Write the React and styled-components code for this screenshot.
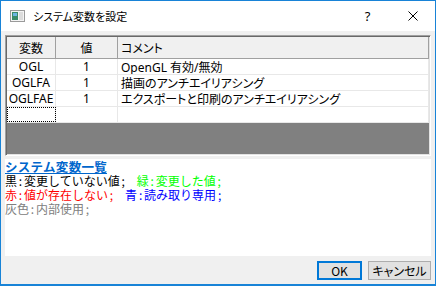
import React from 'react'
import styled, { createGlobalStyle } from 'styled-components'

const Global = createGlobalStyle`
  html, body { margin: 0; padding: 0; background: #fff; }
  * { box-sizing: border-box; }
`

const UI = `"Noto Sans", "Noto Sans CJK JP", sans-serif`
const JP = `"Noto Sans CJK JP", sans-serif`

const Window = styled.div`
  width: 436px;
  height: 286px;
  border: 1px solid #1883d7;
  border-bottom-width: 2px;
  display: flex;
  flex-direction: column;
  background: #f0f0f0;
`

const TitleBar = styled.div`
  height: 30px;
  background: #fff;
  display: flex;
  align-items: center;
  padding-left: 9px;
`

const Title = styled.div`
  flex: 1;
  margin-left: 8px;
  font-family: ${JP};
  font-size: 11px;
  font-feature-settings: "palt";
  color: #000;
`

const CaptionButton = styled.div`
  width: 45px;
  height: 30px;
  display: flex;
  align-items: center;
  justify-content: center;
  font-family: ${UI};
  font-size: 13px;
  color: #000;
`

const Body = styled.div`
  flex: 1;
  display: flex;
  flex-direction: column;
  padding: 4px 4px 5px 4px;
`

const Grid = styled.div`
  height: 121px;
  display: flex;
  flex-direction: column;
  border-top: 1px solid #a0a0a0;
  border-left: 1px solid #a0a0a0;
  border-right: 1px solid #fff;
  border-bottom: 1px solid #fff;
  box-shadow: inset 1px 1px 0 #696969, inset -1px -1px 0 #e3e3e3;
  padding: 1px;
`

const Row = styled.div`
  display: grid;
  grid-template-columns: 49px 62px 1fr;
  height: ${p => (p.$head ? 22 : 16)}px;
  background: ${p => (p.$head ? '#f0f0f0' : '#fff')};
  border-bottom: 1px solid ${p => (p.$head ? '#a0a0a0' : '#e8e8e8')};
`

const Cell = styled.div`
  display: flex;
  align-items: center;
  justify-content: ${p => (p.$left ? 'flex-start' : 'center')};
  padding-left: ${p => (p.$left ? 3 : 0)}px;
  border-right: 1px solid ${p => (p.$head ? '#a0a0a0' : '#e8e8e8')};
  font-family: ${UI};
  font-size: 12px;
  font-feature-settings: "palt";
  color: #000;
  white-space: nowrap;
  overflow: hidden;
  outline: ${p => (p.$focus ? '1px dotted #000' : 'none')};
  outline-offset: -1px;
`

const Empty = styled.div`
  flex: 1;
  background: #808080;
`

const Panel = styled.div`
  height: 97px;
  margin-top: 3px;
  background: #fff;
  font-family: ${JP};
  font-size: 12px;
  line-height: 14px;
  padding-top: 1px;
`

const Line = styled.div`
  white-space: nowrap;
  height: 14px;
`

const Heading = styled.span`
  color: #0066cc;
  font-weight: bold;
  font-size: 12.5px;
  letter-spacing: 0.3px;
  text-decoration: underline;
`

const Part = styled.span`
  color: ${p => p.$c};
  margin-left: ${p => p.$gap || 0}px;
`

const Punct = styled.span`
  display: inline-block;
  width: 7px;
  text-align: center;
`

const Buttons = styled.div`
  margin-top: 5px;
  display: flex;
  justify-content: flex-end;
  gap: 6px;
`

const Button = styled.div`
  height: 19px;
  width: ${p => p.$w}px;
  display: flex;
  align-items: center;
  justify-content: center;
  background: #e1e1e1;
  border: ${p => (p.$default ? '2px solid #0078d7' : '1px solid #adadad')};
  font-family: ${JP};
  font-size: 12px;
  font-feature-settings: "palt";
  color: #000;
`

const AppIcon = () => (
  <svg width="15" height="12" viewBox="0 0 15 12">
    <rect x="0.5" y="0.5" width="14" height="11" fill="#f4f4f4" stroke="#9a9a9a" />
    <rect x="2" y="2" width="6" height="8" fill="#3a8a6a" />
    <rect x="3" y="3" width="4" height="3" fill="#6cb4e4" />
    <rect x="9" y="2" width="4" height="8" fill="#dcdcdc" />
  </svg>
)

const CloseIcon = () => (
  <svg width="10" height="10" viewBox="0 0 10 10">
    <path d="M0.5 0.5 L9.5 9.5 M9.5 0.5 L0.5 9.5" stroke="#000" strokeWidth="1" />
  </svg>
)

const rows = [
  ['OGL', '1', 'OpenGL 有効/無効'],
  ['OGLFA', '1', '描画のアンチエイリアシング'],
  ['OGLFAE', '1', 'エクスポートと印刷のアンチエイリアシング'],
]

const Legend = ({ c, name, text, gap }) => (
  <Part $c={c} $gap={gap}>
    {name}<Punct>:</Punct>{text}<Punct>;</Punct>
  </Part>
)

export default function App() {
  return (
    <>
      <Global />
      <Window>
        <TitleBar>
          <AppIcon />
          <Title>システム変数を設定</Title>
          <CaptionButton>?</CaptionButton>
          <CaptionButton><CloseIcon /></CaptionButton>
        </TitleBar>
        <Body>
          <Grid>
            <Row $head>
              <Cell $head>変数</Cell>
              <Cell $head>値</Cell>
              <Cell $head $left>コメント</Cell>
            </Row>
            {rows.map(r => (
              <Row key={r[0]}>
                <Cell>{r[0]}</Cell>
                <Cell>{r[1]}</Cell>
                <Cell $left>{r[2]}</Cell>
              </Row>
            ))}
            <Row>
              <Cell $focus />
              <Cell />
              <Cell $left />
            </Row>
            <Empty />
          </Grid>
          <Panel>
            <Line><Heading>システム変数一覧</Heading></Line>
            <Line>
              <Legend c="#000" name="黒" text="変更していない値" />
              <Legend c="#00ff00" name="緑" text="変更した値" gap={10} />
            </Line>
            <Line>
              <Legend c="#ff0000" name="赤" text="値が存在しない" />
              <Legend c="#0000ff" name="青" text="読み取り専用" gap={10} />
            </Line>
            <Line>
              <Legend c="#808080" name="灰色" text="内部使用" />
            </Line>
          </Panel>
          <Buttons>
            <Button $w={45} $default>OK</Button>
            <Button $w={63}>キャンセル</Button>
          </Buttons>
        </Body>
      </Window>
    </>
  )
}
